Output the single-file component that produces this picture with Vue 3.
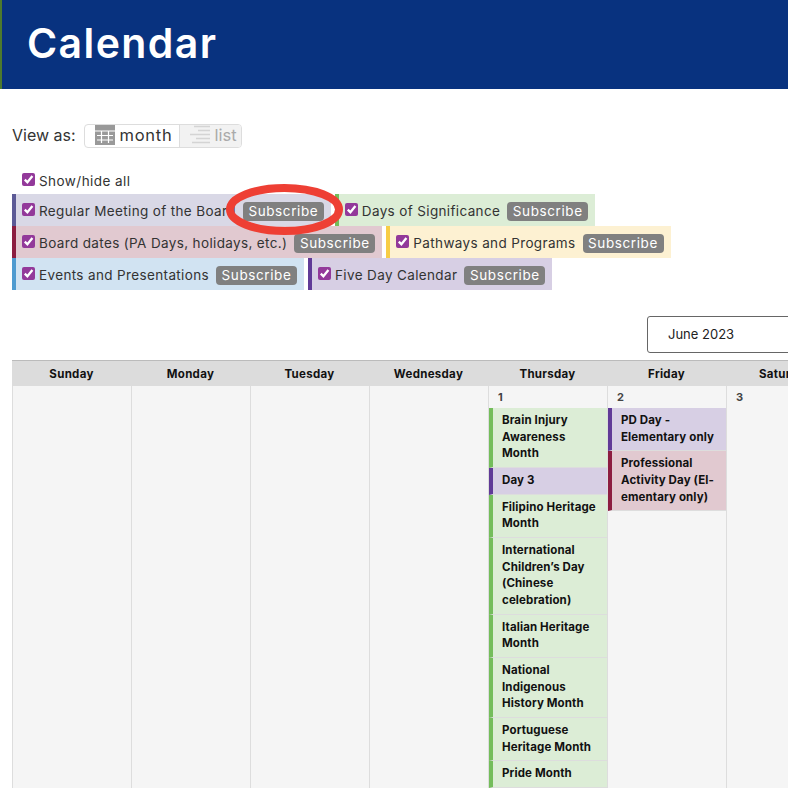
<script setup>
const filters = [
  { name: 'Regular Meeting of the Board', kind: 'board' },
  { name: 'Days of Significance', kind: 'days' },
  { name: 'Board dates (PA Days, holidays, etc.)', kind: 'dates' },
  { name: 'Pathways and Programs', kind: 'paths' },
  { name: 'Events and Presentations', kind: 'events' },
  { name: 'Five Day Calendar', kind: 'five' },
]

const weekdays = ['Sunday', 'Monday', 'Tuesday', 'Wednesday', 'Thursday', 'Friday', 'Saturday']

const days = [
  { num: '', events: [] },
  { num: '', events: [] },
  { num: '', events: [] },
  { num: '', events: [] },
  {
    num: '1',
    events: [
      { text: 'Brain Injury\nAwareness\nMonth', kind: 'days' },
      { text: 'Day 3', kind: 'five' },
      { text: 'Filipino Heritage\nMonth', kind: 'days' },
      { text: 'International\nChildren’s Day\n(Chinese\ncelebration)', kind: 'days' },
      { text: 'Italian Heritage\nMonth', kind: 'days' },
      { text: 'National\nIndigenous\nHistory Month', kind: 'days' },
      { text: 'Portuguese\nHeritage Month', kind: 'days' },
      { text: 'Pride Month', kind: 'days' },
    ],
  },
  {
    num: '2',
    events: [
      { text: 'PD Day -\nElementary only', kind: 'five' },
      { text: 'Professional\nActivity Day (El-\nementary only)', kind: 'dates' },
    ],
  },
  { num: '3', events: [] },
]
</script>

<template>
  <div class="page">
    <header class="banner">
      <h1>Calendar</h1>
    </header>

    <div class="view-as">
      <span class="view-label">View as:</span>
      <div class="toggle">
        <span class="toggle__item">
          <svg width="20" height="20" viewBox="0 0 20 20">
            <rect width="20" height="20" fill="#999" />
            <path d="M0 6h20M2 10.5h16M2 15h16M6.5 6v12M13.5 6v12" stroke="#fff" stroke-width="1.2" fill="none" />
          </svg>
          month
        </span>
        <span class="toggle__item toggle__item--off">
          <svg width="20" height="20" viewBox="0 0 20 20">
            <path d="M4 1.5h16M8 5.5h12M0 9.5h20M6 13.5h14M2 17.5h18" stroke="#d4d4d4" stroke-width="1.6" fill="none" />
          </svg>
          list
        </span>
      </div>
    </div>

    <div class="show-all">
      <svg class="check" viewBox="0 0 13 13"><rect width="13" height="13" rx="2" fill="#93399a" /><path d="M2.8 6.6l2.6 2.6L10.4 3" stroke="#fff" stroke-width="2.3" fill="none" /></svg>
      Show/hide all
    </div>

    <div class="filters">
      <div v-for="f in filters" :key="f.name" :class="['filter', 'tone-' + f.kind]">
        <svg class="check" viewBox="0 0 13 13"><rect width="13" height="13" rx="2" fill="#93399a" /><path d="M2.8 6.6l2.6 2.6L10.4 3" stroke="#fff" stroke-width="2.3" fill="none" /></svg>
        <span class="filter__name">{{ f.name }}</span>
        <span class="subscribe">Subscribe</span>
      </div>
      <svg class="ring" width="125" height="59" viewBox="0 0 125 59">
        <ellipse cx="62.5" cy="29.5" rx="54.5" ry="21.5" fill="none" stroke="#ee3f34" stroke-width="8" />
      </svg>
    </div>

    <div class="picker">June 2023</div>

    <div class="calendar">
      <div v-for="w in weekdays" :key="w" class="weekday">{{ w }}</div>
      <div v-for="(d, i) in days" :key="i" class="day">
        <div class="day__num">{{ d.num }}</div>
        <div v-for="e in d.events" :key="e.text" :class="['event', 'tone-' + e.kind]">{{ e.text }}</div>
      </div>
    </div>
  </div>
</template>

<style>
html, body {
  margin: 0;
  background: #fff;
  overflow: hidden;
}
</style>

<style scoped>
.page {
  width: 788px;
  height: 788px;
  overflow: hidden;
  font-family: Inter, "Liberation Sans", sans-serif;
  color: #333;
}

.banner {
  height: 89px;
  box-sizing: border-box;
  background: #08327f;
  border-left: 2px solid #4d7a2e;
  padding-left: 25px;
  display: flex;
  align-items: center;
}

.banner h1 {
  margin: 0 0 2px;
  color: #fff;
  font-size: 41px;
  font-weight: 600;
  line-height: 1;
  letter-spacing: 1.4px;
}

.view-as {
  display: flex;
  align-items: center;
  gap: 8px;
  margin: 35px 0 0 12px;
  height: 24px;
}

.view-label {
  font-size: 16px;
  margin-top: -2px;
}

.toggle {
  display: flex;
  height: 24px;
  box-sizing: border-box;
  border: 1px solid #ddd;
  border-radius: 4px;
  font-size: 16.5px;
  letter-spacing: 0.7px;
}

.toggle__item {
  display: flex;
  align-items: center;
  gap: 5px;
  padding: 0 0 2px 10px;
  width: 94px;
  box-sizing: border-box;
}

.toggle__item--off {
  width: 62px;
  padding-left: 10px;
  background: #f2f2f2;
  border-left: 1px solid #ddd;
  color: #aaa;
  border-radius: 0 3px 3px 0;
  letter-spacing: 0;
}

.show-all {
  display: flex;
  align-items: center;
  gap: 4px;
  margin: 22px 0 0 22px;
  height: 22px;
  font-size: 13.5px;
  letter-spacing: 0.45px;
}

.check {
  width: 13px;
  height: 13px;
  flex: none;
  margin-top: -3px;
}

.filters {
  position: relative;
  display: flex;
  flex-wrap: wrap;
  margin: 2px 0 0 12px;
}

.filter {
  display: flex;
  align-items: center;
  height: 32px;
  box-sizing: border-box;
  border-left: 4px solid;
  padding: 2px 7px 0 6px;
  margin-right: 4px;
  font-size: 13.5px;
}

.filter__name {
  margin: 0 7px 0 4px;
  letter-spacing: 0.36px;
}

.subscribe {
  width: 81px;
  height: 19px;
  background: #808080;
  color: #fff;
  border-radius: 4px;
  line-height: 19px;
  text-align: center;
  letter-spacing: 0.6px;
}

.ring {
  position: absolute;
  left: 210px;
  top: -14px;
}

.picker {
  margin: 26px 0 0 647px;
  width: 200px;
  height: 37px;
  box-sizing: border-box;
  border: 1px solid #666;
  border-radius: 3px;
  padding-left: 20px;
  line-height: 35px;
  font-size: 13px;
  color: #222;
}

.calendar {
  display: grid;
  grid-template-columns: repeat(7, 119px);
  margin: 7px 0 0 12px;
  width: 833px;
  border-top: 1px solid #bbb;
}

.weekday {
  height: 25px;
  background: #dcdcdc;
  text-align: center;
  font-size: 11.5px;
  font-weight: 700;
  line-height: 26px;
  letter-spacing: 0.3px;
  color: #111;
}

.day {
  min-height: 402px;
  background: #f5f5f5;
  border-left: 1px solid #ddd;
  color: #111;
}

.day__num {
  height: 22px;
  padding-left: 9px;
  font-size: 11px;
  font-weight: 700;
  line-height: 22px;
  color: #444;
}

.event {
  border-left: 4px solid;
  border-bottom: 1px solid #ddd;
  padding: 4px 6px 5px 9px;
  font-size: 11.5px;
  font-weight: 700;
  line-height: 16.67px;
  letter-spacing: 0.12px;
  white-space: pre-line;
}

.tone-board { background: #d9d8e6; border-left-color: #5c5a96; }
.tone-days { background: #dcedd6; border-left-color: #74bd5b; }
.tone-dates { background: #e1c9d0; border-left-color: #8c1d40; }
.tone-paths { background: #fdf1d2; border-left-color: #f7cd46; }
.tone-events { background: #d1e3f2; border-left-color: #4f9bd0; }
.tone-five { background: #d7cfe4; border-left-color: #603a97; }
</style>
